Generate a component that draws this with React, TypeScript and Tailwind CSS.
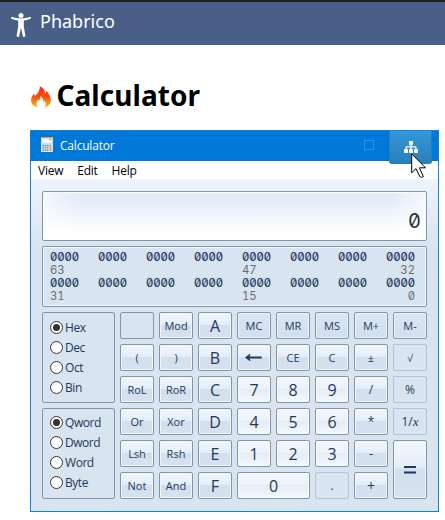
import React from "react";

type Kind = "light" | "op" | "mem" | "off" | "blank";

type Key = {
  label: React.ReactNode;
  kind: Kind;
  text: string;
  span?: string;
};

const kinds: Record<Kind, string> = {
  light:
    "border-[#8495ab] bg-[linear-gradient(#f3f8fe_0%,#edf2f9_46%,#e5ebf4_50%,#f4f9ff_100%)] shadow-[inset_0_0_0_1px_#fbfdff]",
  op: "border-[#8495ab] bg-[linear-gradient(#f2f7fd_0%,#e5edf7_46%,#d3dfec_50%,#d6e2ef_100%)] shadow-[inset_0_0_0_1px_#f1f6fc]",
  mem: "border-[#8495ab] bg-[linear-gradient(#dbe6f3,#d1deed)] shadow-[inset_0_0_0_1px_#e9f1fa]",
  off: "border-[#b3c1d2] bg-[#d9e4f1]",
  blank: "border-[#8495ab] bg-[#d9e4f1]",
};

const sm = "text-[11px]";
const hex = "text-[16px]";
const num = "text-[16px]";

const backArrow = (
  <svg width="17" height="9" viewBox="0 0 17 9" className="-ml-px" fill="none" stroke="#1e395b">
    <path d="M2 4.5H16.7" strokeWidth="2" />
    <path d="M5 1.2L.5 4.5L5 7.8L4 4.5Z" fill="#1e395b" strokeWidth=".8" />
  </svg>
);

const keys: Key[] = [
  { label: "", kind: "blank", text: sm },
  { label: "Mod", kind: "op", text: sm },
  { label: "A", kind: "op", text: hex },
  { label: "MC", kind: "mem", text: sm },
  { label: "MR", kind: "mem", text: sm },
  { label: "MS", kind: "mem", text: sm },
  { label: "M+", kind: "mem", text: sm },
  { label: "M-", kind: "mem", text: sm },
  { label: "(", kind: "op", text: sm },
  { label: ")", kind: "op", text: sm },
  { label: "B", kind: "op", text: hex },
  { label: backArrow, kind: "op", text: sm },
  { label: "CE", kind: "op", text: sm },
  { label: "C", kind: "op", text: sm },
  { label: "±", kind: "op", text: sm },
  { label: "√", kind: "off", text: "text-[10px]" },
  { label: "RoL", kind: "op", text: sm },
  { label: "RoR", kind: "op", text: sm },
  { label: "C", kind: "op", text: hex },
  { label: "7", kind: "light", text: num },
  { label: "8", kind: "light", text: num },
  { label: "9", kind: "light", text: num },
  { label: "/", kind: "op", text: "text-[12px]" },
  { label: "%", kind: "off", text: "text-[12px]" },
  { label: "Or", kind: "op", text: sm },
  { label: "Xor", kind: "op", text: sm },
  { label: "D", kind: "op", text: hex },
  { label: "4", kind: "light", text: num },
  { label: "5", kind: "light", text: num },
  { label: "6", kind: "light", text: num },
  { label: "*", kind: "op", text: "text-[12px]" },
  {
    label: (
      <span>
        1/<i className="font-['Liberation_Serif',serif] text-[13px]">x</i>
      </span>
    ),
    kind: "off",
    text: "text-[12px]",
  },
  { label: "Lsh", kind: "op", text: sm },
  { label: "Rsh", kind: "op", text: sm },
  { label: "E", kind: "op", text: hex },
  { label: "1", kind: "light", text: num },
  { label: "2", kind: "light", text: num },
  { label: "3", kind: "light", text: num },
  { label: "-", kind: "op", text: "text-[13px]" },
  {
    label: (
      <svg width="12" height="8" viewBox="0 0 12 8" className="mt-[1px]" role="img" aria-label="equals">
        <path d="M0 1H12M0 6.5H12" stroke="#1e395b" strokeWidth="1.8" />
      </svg>
    ),
    kind: "op",
    text: sm,
    span: "row-span-2",
  },
  { label: "Not", kind: "op", text: sm },
  { label: "And", kind: "op", text: sm },
  { label: "F", kind: "op", text: hex },
  { label: "0", kind: "light", text: num, span: "col-span-2" },
  { label: ".", kind: "off", text: "text-[12px]" },
  { label: "+", kind: "op", text: "text-[14px]" },
];

function RadioPanel({ items, pad }: { items: string[]; pad: string }) {
  return (
    <div className={`h-[91px] w-[73px] rounded-[2px] border border-[#8495ab] pl-[7px] ${pad}`}>
      {items.map((item, i) => (
        <div key={item} className="flex h-5 items-center text-[12px] tracking-[-0.45px] text-[#1e395b]">
          <span className="-mt-px mr-[2px] flex size-[13px] shrink-0 items-center justify-center rounded-full border border-[#333] bg-white">
            {i === 0 && <span className="size-[7px] rounded-full bg-[#333]" />}
          </span>
          {item}
        </div>
      ))}
    </div>
  );
}

function BitRow({ low, high, mid }: { low: string; high: string; mid: string }) {
  return (
    <>
      <div className="flex justify-between font-medium tracking-[-0.05px] text-[#1e395b]">
        {Array.from({ length: 8 }, (_, i) => (
          <span key={i} className="w-[29px]">0000</span>
        ))}
      </div>
      <div className="flex text-[#6d6d6d]">
        <span className="w-[192px]">{high}</span>
        <span className="flex-1">{mid}</span>
        <span>{low}</span>
      </div>
    </>
  );
}

function Header() {
  return (
    <header className="flex h-[45px] items-start border-t-2 border-[#202024] bg-[#4a5f88]">
      <svg className="mt-[11px] ml-[11px]" width="20" height="24" viewBox="0 0 20 24" fill="#fff">
        <circle cx="10" cy="2.6" r="2.5" />
        <path d="M.4 3.8C4 5 7 5.5 10 5.5S16 5 19.6 3.8L20 5.5C17 6.8 15 7.3 12.8 7.6V13.5L14.5 23.4L12 24L10.2 15.5H9.8L8 24L5.5 23.4L7.2 13.5V7.6C5 7.3 3 6.8 0 5.5Z" />
      </svg>
      <span className="mt-[6px] ml-[9px] text-[18px] leading-[26px] text-white font-['Noto_Sans',sans-serif]">Phabrico</span>
    </header>
  );
}

export default function App() {
  return (
    <div className="h-[520px] w-[445px] overflow-hidden bg-white font-['Open_Sans',sans-serif]">
      <Header />
      <div className="flex h-[85px] items-start pt-[33px] pl-[31px]">
        <svg className="mt-[8px]" width="20" height="22" viewBox="0 0 20 22">
          <defs>
            <linearGradient id="flame" x1="0" y1="0" x2="0" y2="1">
              <stop offset="0" stopColor="#ff2812" />
              <stop offset=".5" stopColor="#f85008" />
              <stop offset="1" stopColor="#ffbd18" />
            </linearGradient>
          </defs>
          <path
            fill="url(#flame)"
            d="M8.7.2C13 2 14 5 14.2 8C15 7 15.2 5.8 15 4.5C18 7.5 20 11 19.8 14.5C19.5 18 17.5 20.5 13.8 21.3C15 18.5 14.8 16.5 13.5 14.5L12.3 16.2C12.5 13.5 11.5 11.5 9.5 10C9.6 12.2 8.8 13.5 7.8 14.8L7 13.5C5.2 16 5 18.6 6.5 21.3C2.5 20.3.2 17.7.1 14.3C0 11.5 1.5 9.5 2.6 7.7L4 9.8C7 7.5 9.2 4 8.7.2Z"
          />
        </svg>
        <h1 className="-mt-px ml-[5.5px] text-[28px] leading-[36px] tracking-[0.06px] font-bold text-black font-['Noto_Sans',sans-serif]">Calculator</h1>
      </div>

      <main className="ml-[30px] h-[382px] w-[409px] border border-[#1480d8] bg-[linear-gradient(#eef4fc_48px,#d9e4f1_115px)]">
        <div className="relative flex h-[30px] items-center bg-[#0078d7] pl-[10px]">
          <svg className="-mt-[3px]" width="12" height="15" viewBox="0 0 12 15">
            <rect width="12" height="15" rx=".7" fill="#dce6eb" />
            <rect width="12" height="1" fill="#d4a24b" />
            <rect x="1" y="2" width="10" height="4" fill="#fff" stroke="#b6c8d4" strokeWidth=".5" />
            <rect x="8" y="2" width="2.5" height="1.3" fill="#e9a744" />
            <path d="M1.5 8.5H10.5M1.5 10.7H8M1.5 13H8" stroke="#6d8fa7" strokeWidth="1.3" strokeDasharray="1.5 .7" />
            <rect x="8.8" y="10" width="1.5" height="4" fill="#f59b18" />
          </svg>
          <span className="ml-[7px] text-[12px] leading-4 tracking-[-0.2px] text-white">Calculator</span>
          <span className="-mt-[2px] ml-auto mr-[64px] size-[10px] border border-[#2e91e2]" />
          <div className="absolute top-0 right-[6px] z-10 flex h-[33px] w-[43px] justify-center rounded-b-[3px] border border-t-0 border-[#267db9] bg-[linear-gradient(#3498db,#2980b9)]">
            <svg className="mt-[10px]" width="14" height="12" viewBox="0 0 14 12" fill="#fff">
              <path d="M5.5 0H8.5L9 .5V3.5L8.5 4H7.7V5.3H11.5Q12.5 5.3 12.5 6.3V8H13.5L14 8.5V11.5L13.5 12H10.5L10 11.5V8.5L10.5 8H11.3V6.5H7.7V8H8.5L9 8.5V11.5L8.5 12H5.5L5 11.5V8.5L5.5 8H6.3V6.5H2.7V8H3.5L4 8.5V11.5L3.5 12H.5L0 11.5V8.5L.5 8H1.5V6.3Q1.5 5.3 2.5 5.3H6.3V4H5.5L5 3.5V.5Z" />
            </svg>
          </div>
          <svg className="absolute top-[22px] left-[380px] z-20" width="16" height="26" viewBox="0 0 16 26" fill="#fff" stroke="#000">
            <path d="M.7.8V19.8L5 15.6L8.8 23.6Q10.5 25.3 12.4 23.6L8.4 14.8H14.5Z" />
          </svg>
        </div>
        <nav className="flex h-[18px] items-center gap-[14px] bg-white pt-px pl-[7px] text-[12px] tracking-[-0.25px] text-black">
          <span>View</span>
          <span>Edit</span>
          <span>Help</span>
        </nav>
        <div className="px-[11px] pt-[12px]">
          <div className="flex h-[50px] items-center justify-end rounded-[2px] border border-[#8495ab] bg-[linear-gradient(90deg,#ffffff99,#ffffff00_9%,#ffffff00_91%,#ffffff99),linear-gradient(#e2ecf9,#e6eefa_25%,#ffffff_85%)] pt-[9px] pr-[5px] shadow-[inset_0_0_0_1px_#fafcff]">
            <span className="text-[20px] leading-6 text-[#2e3038] font-['Inter',sans-serif] [font-feature-settings:'zero','tnum']">0</span>
          </div>
          <div className="mt-[5px] h-[61px] rounded-[2px] border border-[#8495ab] bg-[#d9e4f1] pt-[4px] pr-[11px] pl-[7px] text-[11.3px] leading-[13px] shadow-[inset_0_0_0_1px_#f4f8fd] font-['Inter',sans-serif] [font-feature-settings:'zero','tnum']">
            <BitRow high="63" mid="47" low="32" />
            <BitRow high="31" mid="15" low="0" />
          </div>
          <div className="mt-[5px] flex gap-[5px]">
            <div className="flex flex-col gap-[5px]">
              <RadioPanel items={["Hex", "Dec", "Oct", "Bin"]} pad="pt-[5px]" />
              <RadioPanel items={["Qword", "Dword", "Word", "Byte"]} pad="pt-[4px]" />
            </div>
            <div className="grid grid-cols-[repeat(8,34px)] grid-rows-[repeat(6,27px)] gap-[5px]">
              {keys.map((k, i) => (
                <button
                  key={i}
                  className={`flex items-center justify-center rounded-[2px] border leading-none text-[#1e395b] ${kinds[k.kind]} ${k.text} ${k.span ?? ""}`}
                >
                  {k.label}
                </button>
              ))}
            </div>
          </div>
        </div>
      </main>
    </div>
  );
}
